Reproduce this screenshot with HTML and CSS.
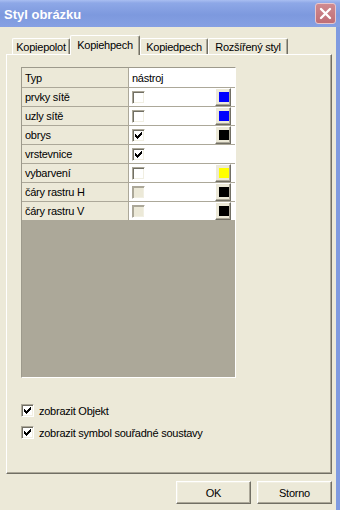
FILE: index.html
```html
<!DOCTYPE html>
<html>
<head>
<meta charset="utf-8">
<link rel="stylesheet" href="styles.css">
</head>
<body>
<div class="window">
  <div class="titlebar">
    <span class="title">Styl obrázku</span>
    <div class="close">
      <svg width="19" height="19" viewBox="0 0 19 19"><path d="M5 5 L14 14 M14 5 L5 14" stroke="#fff" stroke-width="2.4" stroke-linecap="round"/></svg>
    </div>
  </div>
  <div class="client">
    <div class="tabs">
      <div class="tab t1">Kopiepolot</div>
      <div class="tab t2 active">Kopiehpech</div>
      <div class="tab t3">Kopiedpech</div>
      <div class="tab t4">Rozšířený styl</div>
    </div>
    <div class="panel">
      <div class="grid">
        <div class="row head"><div class="name">Typ</div><div class="val">nástroj</div></div>
        <div class="row"><div class="name">prvky sítě</div><div class="val"><span class="cb"></span><span class="swatch"><i class="blue"></i></span></div></div>
        <div class="row"><div class="name">uzly sítě</div><div class="val"><span class="cb"></span><span class="swatch"><i class="blue"></i></span></div></div>
        <div class="row"><div class="name">obrys</div><div class="val"><span class="cb"><svg class="chk" viewBox="0 0 9 9"><path d="M7 1h1v1h-1z M6 2h2v1h-2z M1 3h1v1h-1z M5 3h3v1h-3z M1 4h2v1h-2z M4 4h3v1h-3z M1 5h5v1h-5z M2 6h3v1h-3z M3 7h1v1h-1z"/></svg></span><span class="swatch"><i class="black"></i></span></div></div>
        <div class="row"><div class="name">vrstevnice</div><div class="val"><span class="cb"><svg class="chk" viewBox="0 0 9 9"><path d="M7 1h1v1h-1z M6 2h2v1h-2z M1 3h1v1h-1z M5 3h3v1h-3z M1 4h2v1h-2z M4 4h3v1h-3z M1 5h5v1h-5z M2 6h3v1h-3z M3 7h1v1h-1z"/></svg></span></div></div>
        <div class="row"><div class="name">vybarvení</div><div class="val"><span class="cb"></span><span class="swatch"><i class="yellow"></i></span></div></div>
        <div class="row"><div class="name">čáry rastru H</div><div class="val"><span class="cb disabled"></span><span class="swatch"><i class="black"></i></span></div></div>
        <div class="row"><div class="name">čáry rastru V</div><div class="val"><span class="cb disabled"></span><span class="swatch"><i class="black"></i></span></div></div>
      </div>
      <div class="options">
        <div class="opt"><span class="cb"><svg class="chk" viewBox="0 0 9 9"><path d="M7 1h1v1h-1z M6 2h2v1h-2z M1 3h1v1h-1z M5 3h3v1h-3z M1 4h2v1h-2z M4 4h3v1h-3z M1 5h5v1h-5z M2 6h3v1h-3z M3 7h1v1h-1z"/></svg></span><span>zobrazit Objekt</span></div>
        <div class="opt"><span class="cb"><svg class="chk" viewBox="0 0 9 9"><path d="M7 1h1v1h-1z M6 2h2v1h-2z M1 3h1v1h-1z M5 3h3v1h-3z M1 4h2v1h-2z M4 4h3v1h-3z M1 5h5v1h-5z M2 6h3v1h-3z M3 7h1v1h-1z"/></svg></span><span>zobrazit symbol souřadné soustavy</span></div>
      </div>
    </div>
    <div class="buttons">
      <div class="btn">OK</div>
      <div class="btn">Storno</div>
    </div>
  </div>
</div>
</body>
</html>
```
FILE: styles.css
```css
html, body {
  margin: 0;
  padding: 0;
}
body {
  width: 340px;
  height: 510px;
  overflow: hidden;
  font-family: "Liberation Sans", Arial, sans-serif;
  font-size: 11px;
  letter-spacing: -0.25px;
  color: #000;
}
.window {
  width: 340px;
  height: 510px;
  display: flex;
  flex-direction: column;
  background: #7f9be0;
}
.titlebar {
  height: 27px;
  flex: none;
  box-sizing: border-box;
  display: flex;
  align-items: center;
  justify-content: space-between;
  padding: 0 4px 0 4px;
  background: linear-gradient(to bottom, #a9bef1 0, #8ea8e7 3px, #7d99de 55%, #86a0e3 100%);
}
.title {
  font-size: 13px;
  font-weight: bold;
  letter-spacing: 0;
  color: #fff;
  padding-top: 1px;
}
.close {
  width: 21px;
  height: 21px;
  box-sizing: border-box;
  border: 1px solid #e8c6cb;
  border-radius: 3px;
  background: linear-gradient(to bottom, #cf8a90, #bf6e76);
  display: flex;
  align-items: center;
  justify-content: center;
}
.close svg { display: block; }
.client {
  flex: 1;
  margin-right: 4px;
  background: #ece9d8;
  padding: 0 4px 0 6px;
  display: flex;
  flex-direction: column;
}
.tabs {
  height: 27px;
  flex: none;
  display: flex;
  align-items: flex-end;
  padding-left: 6px;
}
.tab {
  box-sizing: border-box;
  height: 16px;
  border-top: 1px solid #fff;
  border-left: 1px solid #fff;
  border-right: 1px solid #716f64;
  border-radius: 2px 2px 0 0;
  box-shadow: inset -1px 0 0 #aca899;
  display: flex;
  align-items: center;
  justify-content: center;
  padding-top: 1px;
}
.t1 { width: 58px; }
.t2 { width: 70px; }
.t3 { width: 68px; }
.t4 { width: 80px; }
.tab.active {
  height: 20px;
  margin-bottom: -1px;
  position: relative;
  z-index: 1;
  background: #ece9d8;
  align-items: flex-start;
  padding-top: 3px;
}
.panel {
  flex: none;
  height: 420px;
  box-sizing: border-box;
  border-top: 1px solid #fff;
  border-left: 1px solid #fff;
  border-right: 1px solid #716f64;
  border-bottom: 1px solid #716f64;
  box-shadow: inset -1px -1px 0 #aca899;
  padding: 12px 0 0 14px;
  display: flex;
  flex-direction: column;
}
.grid {
  width: 215px;
  height: 311px;
  box-sizing: border-box;
  border-style: solid;
  border-width: 1px;
  border-color: #9d9a8c #fff #fff #9d9a8c;
  background: #aca899;
  display: flex;
  flex-direction: column;
}
.row {
  display: grid;
  grid-template-columns: 107px 1fr;
  height: 19px;
  box-sizing: border-box;
  border-bottom: 1px solid #aca899;
}
.row.head { height: 20px; }
.name {
  background: #ece9d8;
  border-right: 1px solid #aca899;
  padding-left: 3px;
  display: flex;
  align-items: center;
}
.val {
  background: #fff;
  padding-left: 3px;
  display: flex;
  align-items: center;
}
.cb {
  width: 13px;
  height: 13px;
  flex: none;
  box-sizing: border-box;
  border-style: solid;
  border-width: 1px;
  border-color: #aca899 #fff #fff #aca899;
  box-shadow: inset 1px 1px 0 #716f64, inset -1px -1px 0 #f1efe2;
  background: #fff;
}
.cb.disabled {
  background: #ece9d8;
  box-shadow: inset 1px 1px 0 #aca899, inset -1px -1px 0 #f1efe2;
}
.chk {
  display: block;
  width: 9px;
  height: 9px;
  margin: 1px;
  shape-rendering: crispEdges;
  fill: #000;
}
.swatch {
  margin-left: auto;
  margin-right: 4px;
  align-self: stretch;
  width: 16px;
  box-sizing: border-box;
  border-style: solid;
  border-width: 1px;
  border-color: #fff #716f64 #716f64 #fff;
  box-shadow: inset -1px -1px 0 #aca899;
  background: #ece9d8;
  padding: 3px 0 0 3px;
}
.swatch i {
  display: block;
  width: 10px;
  height: 10px;
}
.blue { background: #0000ff; }
.black { background: #000; }
.yellow { background: #ffff00; }
.options {
  margin-top: 26px;
  display: flex;
  flex-direction: column;
  gap: 9px;
}
.opt {
  display: flex;
  align-items: center;
  gap: 5px;
  height: 13px;
}
.buttons {
  margin-top: 7px;
  display: flex;
  justify-content: flex-end;
  gap: 6px;
}
.btn {
  width: 75px;
  height: 23px;
  box-sizing: border-box;
  border-style: solid;
  border-width: 1px;
  border-color: #fff #716f64 #716f64 #fff;
  box-shadow: inset -1px -1px 0 #aca899, inset 1px 1px 0 #f1efe2;
  display: flex;
  align-items: center;
  justify-content: center;
}
```
